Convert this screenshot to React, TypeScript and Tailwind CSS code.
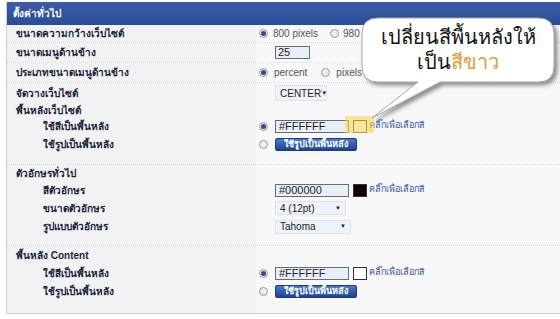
import React from "react";

const FONT = "font-['Liberation_Sans','DejaVu_Sans','Noto_Sans',sans-serif]";

function Radio({ on }: { on?: boolean }) {
  return (
    <span className="inline-flex w-[9px] h-[9px] shrink-0 rounded-full border border-[#9a9a9a] bg-[#ececec] items-center justify-center">
      {on && <span className="w-[5px] h-[5px] rounded-full bg-[#2b4a98]" />}
    </span>
  );
}

function ColorInput({ value, swatch }: { value: string; swatch: string }) {
  return (
    <div className="flex items-center">
      <div className="w-[74px] h-[13px] border border-[#6b6b6b] bg-[#e9eff8] text-[11px] leading-[11px] pl-[3px] text-[#222]">
        {value}
      </div>
      <div className="ml-[4px] w-[14px] h-[13px] border border-[#333]" style={{ background: swatch }} />
      <span className="ml-[2px] text-[9px] text-[#3b58a8]">คลิ๊กเพื่อเลือกสี</span>
    </div>
  );
}

function ImgButton() {
  return (
    <div className="w-[82px] h-[13px] rounded-[2px] bg-gradient-to-b from-[#4a78c8] to-[#1f4290] border border-[#1c3a80] text-white text-[9px] font-bold leading-[11px] text-center">
      ใช้รูปเป็นพื้นหลัง
    </div>
  );
}

function Select({ text, w, h }: { text: string; w: string; h: string }) {
  return (
    <div className={`${w} ${h} flex items-center justify-between bg-[#eef3f9] border border-[#e2e2e2] pl-[4px] pr-[4px] text-[10px] text-[#222]`}>
      <span>{text}</span>
      <span className="text-[6px]">▼</span>
    </div>
  );
}

function Row({ label, sub, h, dotted, children }: { label: string; sub?: boolean; h: string; dotted?: boolean; children?: React.ReactNode }) {
  return (
    <div className={`flex ${h} ${dotted ? "border-b border-dotted border-[#d6d6d6]" : ""}`}>
      <div className={`w-[249px] flex items-center bg-[#f2f2f2] text-[10px] font-bold text-[#1c2440] ${sub ? "pl-[36px]" : "pl-[9px]"}`}>
        {label}
      </div>
      <div className="flex-1 flex items-center bg-[#f8f8f8] pl-[3px] text-[10px] text-[#555]">{children}</div>
    </div>
  );
}

function Section({ title, h, children }: { title: string; h: string; children: React.ReactNode }) {
  return (
    <div className="flex flex-col border-b border-dotted border-[#d6d6d6]">
      <Row label={title} h={h} />
      {children}
    </div>
  );
}

export default function App() {
  return (
    <div className={`relative w-[560px] h-[319px] bg-white overflow-hidden ${FONT}`}>
      <div className="ml-[6px] mt-[2px] border-l border-b border-[#cfcfcf]">
        <div className="h-[23px] flex items-center pl-[6px] bg-gradient-to-b from-[#3a5ca8] to-[#2b4c96] text-white text-[10px] font-bold">
          ตั้งค่าทั่วไป
        </div>

        <Row label="ขนาดความกว้างเว็บไซต์" h="h-[18px]" dotted>
          <Radio on />
          <span className="ml-[5px]">800 pixels</span>
          <span className="ml-[12px] flex items-center whitespace-nowrap">
            <Radio />
            <span className="ml-[4px]">980 pix</span>
          </span>
        </Row>
        <Row label="ขนาดเมนูด้านข้าง" h="h-[20px]" dotted>
          <div className="ml-[16px] w-[35px] h-[13px] border border-[#6b6b6b] bg-[#e9eff8] text-[11px] leading-[11px] pl-[2px] text-[#222]">25</div>
        </Row>
        <Row label="ประเภทขนาดเมนูด้านข้าง" h="h-[20px]" dotted>
          <Radio on />
          <span className="ml-[6px]">percent</span>
          <span className="ml-[14px] flex items-center">
            <Radio />
            <span className="ml-[6px]">pixels</span>
          </span>
        </Row>
        <Row label="จัดวางเว็บไซต์" h="h-[20px]">
          <div className="ml-[16px]">
            <Select text="CENTER" w="w-[52px]" h="h-[16px]" />
          </div>
        </Row>

        <Section title="พื้นหลังเว็บไซต์" h="h-[14px]">
          <Row label="ใช้สีเป็นพื้นหลัง" sub h="h-[18px]">
            <Radio on />
            <div className="ml-[7px]"><ColorInput value="#FFFFFF" swatch="#ffffff" /></div>
          </Row>
          <Row label="ใช้รูปเป็นพื้นหลัง" sub h="h-[18px]">
            <Radio />
            <div className="ml-[7px]"><ImgButton /></div>
          </Row>
          <Row label="" h="h-[11px]" />
        </Section>

        <Section title="ตัวอักษรทั่วไป" h="h-[16px]">
          <Row label="สีตัวอักษร" sub h="h-[18px]">
            <div className="ml-[16px]"><ColorInput value="#000000" swatch="#120404" /></div>
          </Row>
          <Row label="ขนาดตัวอักษร" sub h="h-[18px]">
            <div className="ml-[16px]"><Select text="4 (12pt)" w="w-[71px]" h="h-[14px]" /></div>
          </Row>
          <Row label="รูปแบบตัวอักษร" sub h="h-[19px]">
            <div className="ml-[16px]"><Select text="Tahoma" w="w-[76px]" h="h-[14px]" /></div>
          </Row>
          <Row label="" h="h-[9px]" />
        </Section>

        <div className="flex flex-col">
          <Row label="พื้นหลัง Content" h="h-[18px]" />
          <Row label="ใช้สีเป็นพื้นหลัง" sub h="h-[18px]">
            <Radio on />
            <div className="ml-[7px]"><ColorInput value="#FFFFFF" swatch="#ffffff" /></div>
          </Row>
          <Row label="ใช้รูปเป็นพื้นหลัง" sub h="h-[19px]">
            <Radio />
            <div className="ml-[7px]"><ImgButton /></div>
          </Row>
          <Row label="" h="h-[12px]" />
        </div>
      </div>

      {/* yellow highlight on swatch */}
      <div className="absolute left-[345px] top-[116px] w-[29px] h-[17px] bg-[#fcd658]/60" />

      {/* callout */}
      <svg className="absolute left-0 top-0 pointer-events-none" width="560" height="319">
        <defs>
          <filter id="sh" x="-10%" y="-10%" width="130%" height="140%">
            <feDropShadow dx="3" dy="3" stdDeviation="2" floodColor="#444" floodOpacity="0.6" />
          </filter>
        </defs>
        <path
          d="M378 18 H538 Q554 18 554 34 V66 Q554 82 538 82 H440 L372 118 L418 82 H378 Q362 82 362 66 V34 Q362 18 378 18 Z"
          fill="#ffffff"
          stroke="#a8a8a8"
          strokeWidth="1"
          filter="url(#sh)"
        />
      </svg>
      <div className="absolute left-[362px] top-[25px] w-[192px] text-center text-[20px] leading-[25px] text-[#111]">
        <div>เปลี่ยนสีพื้นหลังให้</div>
        <div>
          เป็น<span className="text-[#e39a32]">สีขาว</span>
        </div>
      </div>
    </div>
  );
}
